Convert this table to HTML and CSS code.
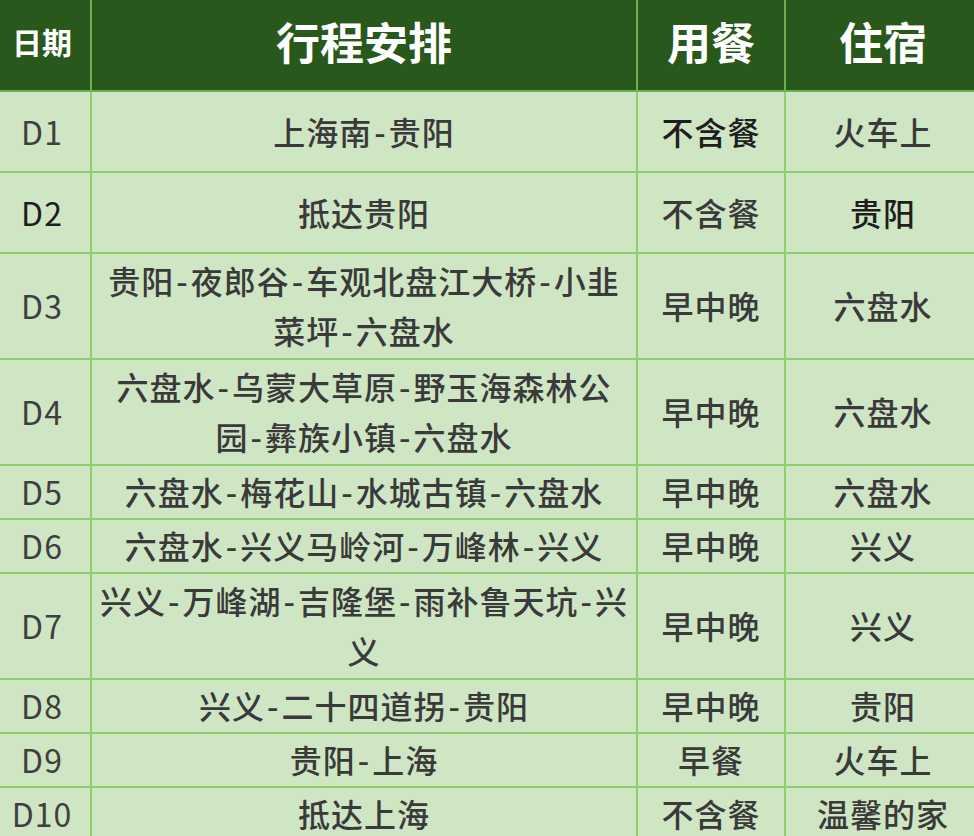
FILE: index.html
```html
<!DOCTYPE html>
<html lang="zh-CN">
<head>
<meta charset="utf-8">
<title>行程安排</title>
<link rel="stylesheet" href="styles.css">
</head>
<body>
<table class="trip">
  <colgroup>
    <col class="c-day">
    <col class="c-plan">
    <col class="c-meal">
    <col class="c-stay">
  </colgroup>
  <thead>
    <tr class="h-head">
      <th class="th-small">日期</th>
      <th>行程安排</th>
      <th>用餐</th>
      <th>住宿</th>
    </tr>
  </thead>
  <tbody>
    <tr class="h-tall"><td>D1</td><td>上海南<span class="dash">-</span>贵阳</td><td class="dark">不含餐</td><td>火车上</td></tr>
    <tr class="h-tall"><td class="dark">D2</td><td>抵达贵阳</td><td>不含餐</td><td class="dark">贵阳</td></tr>
    <tr class="h-two"><td>D3</td><td>贵阳<span class="dash">-</span>夜郎谷<span class="dash">-</span>车观北盘江大桥<span class="dash">-</span>小韭<br>菜坪<span class="dash">-</span>六盘水</td><td>早中晚</td><td>六盘水</td></tr>
    <tr class="h-two"><td>D4</td><td>六盘水<span class="dash">-</span>乌蒙大草原<span class="dash">-</span>野玉海森林公<br>园<span class="dash">-</span>彝族小镇<span class="dash">-</span>六盘水</td><td>早中晚</td><td>六盘水</td></tr>
    <tr class="h-one"><td>D5</td><td>六盘水<span class="dash">-</span>梅花山<span class="dash">-</span>水城古镇<span class="dash">-</span>六盘水</td><td>早中晚</td><td>六盘水</td></tr>
    <tr class="h-one"><td>D6</td><td>六盘水<span class="dash">-</span>兴义马岭河<span class="dash">-</span>万峰林<span class="dash">-</span>兴义</td><td>早中晚</td><td>兴义</td></tr>
    <tr class="h-two"><td>D7</td><td>兴义<span class="dash">-</span>万峰湖<span class="dash">-</span>吉隆堡<span class="dash">-</span>雨补鲁天坑<span class="dash">-</span>兴<br>义</td><td>早中晚</td><td>兴义</td></tr>
    <tr class="h-one"><td>D8</td><td>兴义<span class="dash">-</span>二十四道拐<span class="dash">-</span>贵阳</td><td>早中晚</td><td>贵阳</td></tr>
    <tr class="h-one"><td>D9</td><td>贵阳<span class="dash">-</span>上海</td><td>早餐</td><td>火车上</td></tr>
    <tr class="h-one"><td>D10</td><td>抵达上海</td><td>不含餐</td><td>温馨的家</td></tr>
  </tbody>
</table>
</body>
</html>
```

FILE: styles.css
```css
html, body {
  margin: 0;
  padding: 0;
  background: #cfe6c4;
  overflow: hidden;
}

.trip {
  border-collapse: collapse;
  table-layout: fixed;
  width: 988px;
  margin: -2px 0 0 -8px;
  font-family: "Noto Sans CJK SC", "Noto Sans", sans-serif;
  color: #3a3a3a;
}

.c-day { width: 98px; }
.c-plan { width: 546px; }
.c-meal { width: 148px; }
.c-stay { width: 196px; }

.trip th,
.trip td {
  border: 2px solid #8fcf70;
  text-align: center;
  vertical-align: middle;
  padding: 0 2px;
  white-space: nowrap;
}

.trip th {
  background: #28581b;
  color: #ffffff;
  font-size: 44px;
  font-weight: 700;
  line-height: 1.2;
  padding-bottom: 8px;
  border-color: #6fb04e;
}

.trip th.th-small {
  font-size: 30px;
}

.trip td {
  background: #cfe6c4;
  font-size: 32px;
  font-weight: 500;
  line-height: 50px;
  letter-spacing: 1px;
  padding-bottom: 2px;
}

.trip td:first-child {
  font-weight: 400;
  color: #3f3f3f;
}

.trip td.dark {
  color: #1e1e1e;
}

.dash {
  margin: 0 2px;
}

.h-head { height: 92px; }
.h-tall { height: 81px; }
.h-two { height: 106px; }
.h-one { height: 54px; }
```
